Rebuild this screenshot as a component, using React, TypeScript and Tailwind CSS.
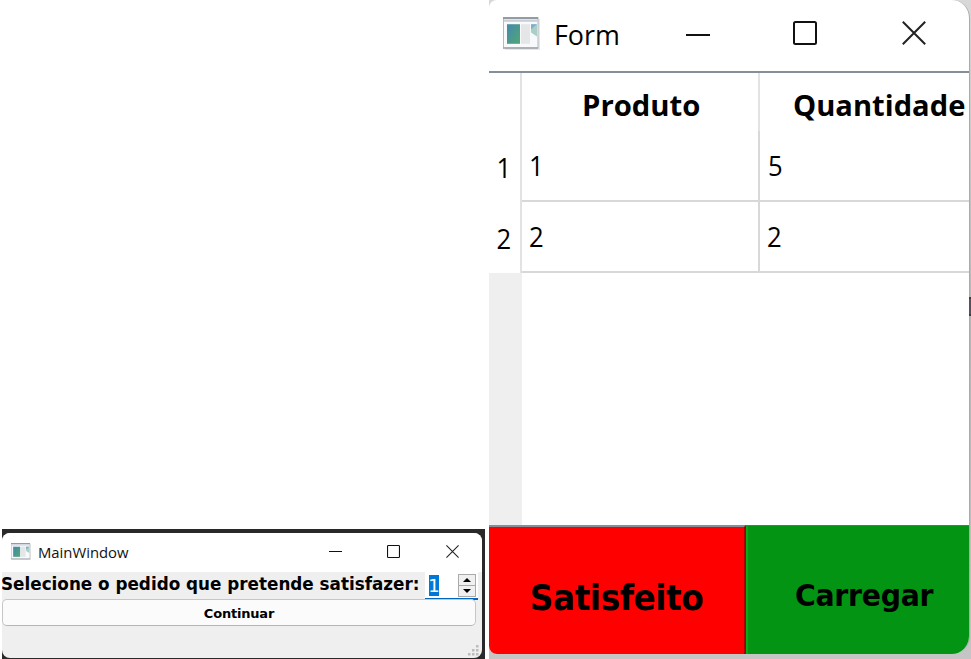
import type { ReactNode } from "react";

const UI = "font-['Open_Sans','Noto_Sans',sans-serif]";
const BOLD = "font-['DejaVu_Sans','Noto_Sans',sans-serif] font-bold";

function AppIcon({ className }: { className: string }) {
  return (
    <svg className={className} viewBox="0 0 37 32" preserveAspectRatio="none">
      <defs>
        <linearGradient id="pane" x1="0" y1="0" x2="1" y2="1">
          <stop offset="0" stopColor="#4687ad" />
          <stop offset="1" stopColor="#50a873" />
        </linearGradient>
      </defs>
      <path d="M2 2H37V32H2Z" fill="#e7e7e7" />
      <rect x="0.5" y="0.5" width="34.5" height="29.5" fill="#f7f9fa" stroke="#b4bac0" />
      <path d="M0 1H35" stroke="#939ba3" strokeWidth="2" />
      <path d="M1 3.5H35" stroke="#c9ced7" strokeWidth="2" />
      <path d="M0 30H35" stroke="#a2a6ab" strokeWidth="1.5" />
      <rect x="4" y="7" width="13" height="19" fill="url(#pane)" />
      <rect x="18" y="7" width="9" height="19" fill="#e4e6e8" />
      <path d="M28 7H34V19L28 15Z" fill="#a9cfc7" />
      <path d="M28 7H34L28 12Z" fill="#83acd0" />
    </svg>
  );
}

function Minimize({ className, y = 13, weight = 2 }: { className: string; y?: number; weight?: number }) {
  return (
    <svg className={className} viewBox="0 0 24 24" preserveAspectRatio="none">
      <path d={`M0 ${y}H24`} stroke="#111" strokeWidth={weight} />
    </svg>
  );
}

function Maximize({ className }: { className: string }) {
  return (
    <svg className={className} viewBox="0 0 24 24">
      <rect x="1" y="1" width="22" height="22" rx="1.5" fill="none" stroke="#111" strokeWidth="2" />
    </svg>
  );
}

function Close({ className }: { className: string }) {
  return (
    <svg className={className} viewBox="0 0 24 24">
      <path d="M0.8 0.8L23.2 23.2M23.2 0.8L0.8 23.2" stroke="#222" strokeWidth="2" />
    </svg>
  );
}

function Cell({ children, className }: { children: ReactNode; className: string }) {
  return (
    <div className={`flex h-[71px] items-center border-b-2 border-[#d8d8d8] text-[27px] leading-none ${className}`}>
      <span className="inline-block origin-left scale-x-[0.95]">{children}</span>
    </div>
  );
}

function MainWindow() {
  return (
    <section className="mt-[529px] ml-[2px] h-[130px] w-[483px] shrink-0 bg-[#292929] pt-1">
      <div className="flex h-[125px] w-[480px] flex-col overflow-hidden rounded-lg bg-[#efefef]">
        <header className="flex h-[39px] shrink-0 items-center bg-white pl-[9px]">
          <AppIcon className="mb-0.5 h-[17px] w-5" />
          <span className={`ml-[7px] w-[92px] text-[15px] leading-none whitespace-nowrap text-[#111] ${UI}`}>
            <span className="inline-block origin-left scale-x-[0.99]">MainWindow</span>
          </span>
          <Minimize className="mb-0.5 ml-[199px] h-[13px] w-[13px]" y={12} weight={1.85} />
          <Maximize className="mb-0.5 ml-[45px] h-[13px] w-[13px]" />
          <Close className="mb-0.5 ml-[46px] h-[13px] w-[13px]" />
        </header>
        <div className="flex h-[28px] shrink-0">
          <label className={`-ml-px w-[424px] text-[18px] leading-[23px] whitespace-nowrap text-black ${BOLD}`}>
            <span className="inline-block w-[444px] origin-left scale-x-[0.933]">Selecione o pedido que pretende satisfazer:</span>
          </label>
          <div className="flex h-[28px] w-[53px] border-b-2 border-[#0067c0] bg-white pt-[3px] pr-0.5 pl-1">
            <span className="flex h-[21px] w-[10px] items-center justify-center bg-[#0078d7] text-[18px] leading-none text-white font-['DejaVu_Sans',sans-serif]">
              1
            </span>
            <div className="-mt-px ml-auto flex h-[23px] w-[18px] flex-col border border-[#aaa] bg-[#f0f0f0]">
              <div className="flex flex-1 items-center justify-center border-b border-[#aaa]">
                <svg className="h-1 w-2" viewBox="0 0 8 4"><path d="M0 4L4 0L8 4Z" /></svg>
              </div>
              <div className="flex flex-1 items-center justify-center">
                <svg className="h-1 w-2" viewBox="0 0 8 4"><path d="M0 0L4 4L8 0Z" /></svg>
              </div>
            </div>
          </div>
        </div>
        <button className={`-mt-px flex h-[27px] w-[474px] shrink-0 items-center justify-center rounded-[5px] border border-[#c6c6c6] border-b-[#b5b5b5] bg-[#fbfbfb] pt-0.5 text-[13px] leading-none tracking-[-0.2px] text-black ${BOLD}`}>
          Continuar
        </button>
        <svg className="mt-auto mr-[3px] mb-0.5 h-[11px] w-[11px] self-end" viewBox="0 0 11 11" fill="#bcbcbc">
          <path d="M8 0h2.5v2.5H8zM4 4h2.5v2.5H4zM8 4h2.5v2.5H8zM0 8h2.5v2.5H0zM4 8h2.5v2.5H4zM8 8h2.5v2.5H8z" />
        </svg>
      </div>
    </section>
  );
}

function FormWindow() {
  return (
    <section className="ml-1 flex h-[659px] w-[482px] shrink-0 bg-linear-to-b from-[#d8d8d8] via-[#b5b5b5] to-[#c5c5c5]">
      <div className="flex h-[654px] w-[481px] shrink-0 flex-col overflow-hidden rounded-tl-lg rounded-tr-[18px] rounded-br-[18px] rounded-bl-lg border-r border-[#ababab] bg-white">
        <header className="flex h-[71px] shrink-0 items-center pl-[14px]">
          <AppIcon className="mb-[5px] h-[33px] w-[37px]" />
          <span className={`mb-1 ml-[14px] w-[70px] text-[28px] leading-none text-black ${UI}`}>
            <span className="inline-block origin-left scale-x-[0.96]">Form</span>
          </span>
          <Minimize className="mb-[3px] ml-[62px] h-6 w-6" />
          <Maximize className="mb-[5px] ml-[83px] h-6 w-6" />
          <Close className="mb-[5px] ml-[85px] h-6 w-6" />
        </header>
        <div className={`flex h-[454px] shrink-0 border-t-2 border-[#858f99] text-black ${UI}`}>
          <div className="flex w-[33px] shrink-0 flex-col bg-[#efefef]">
            <div className="h-[200px] border-r-2 border-[#e2e2e2] bg-white pt-[59px] pr-0.5 text-[27px] leading-none">
              <div className="flex h-[71px] items-center justify-center"><span className="inline-block scale-x-[0.95]">1</span></div>
              <div className="flex h-[71px] items-center justify-center"><span className="inline-block scale-x-[0.95]">2</span></div>
            </div>
          </div>
          <div className="w-[447px]">
            <div className="flex h-[58px] text-[29px] leading-[64px] font-bold">
              <div className="w-[238px] border-r-2 border-[#e3e3e3] pl-[60px]">
                <span className="inline-block origin-left scale-x-[1.01]">Produto</span>
              </div>
              <div className="pl-[33px]">
                <span className="inline-block origin-left scale-x-[1.005]">Quantidade</span>
              </div>
            </div>
            <div className="grid grid-cols-[238px_209px]">
              <Cell className="border-r-2 pl-[7px]">1</Cell>
              <Cell className="pl-2">5</Cell>
              <Cell className="border-r-2 pl-[7px]">2</Cell>
              <Cell className="pl-[7px]">2</Cell>
            </div>
          </div>
        </div>
        <div className={`flex flex-1 text-black ${BOLD}`}>
          <button className="flex w-[257px] items-center justify-center border-t-2 border-r-2 border-t-[#858f99] border-r-[#a80000] bg-[#ff0000] pt-[15px] text-[35px] leading-none tracking-[-0.5px]">
            <span className="inline-block scale-x-[0.937]">Satisfeito</span>
          </button>
          <button className="flex flex-1 items-center border-t border-l-2 border-[#08ac1b] bg-[#049413] pt-[12px] pl-[47px] text-[30px] leading-none tracking-[-0.3px]">
            <span className="inline-block origin-left scale-x-[0.945]">Carregar</span>
          </button>
        </div>
      </div>
      <div className="mt-[297px] -ml-px h-[19px] w-0.5 shrink-0 border-y-2 border-[#3d3d3d] bg-[#57505f]" />
    </section>
  );
}

export default function App() {
  return (
    <main className="flex h-[659px] w-[971px] overflow-hidden bg-white">
      <MainWindow />
      <FormWindow />
    </main>
  );
}
